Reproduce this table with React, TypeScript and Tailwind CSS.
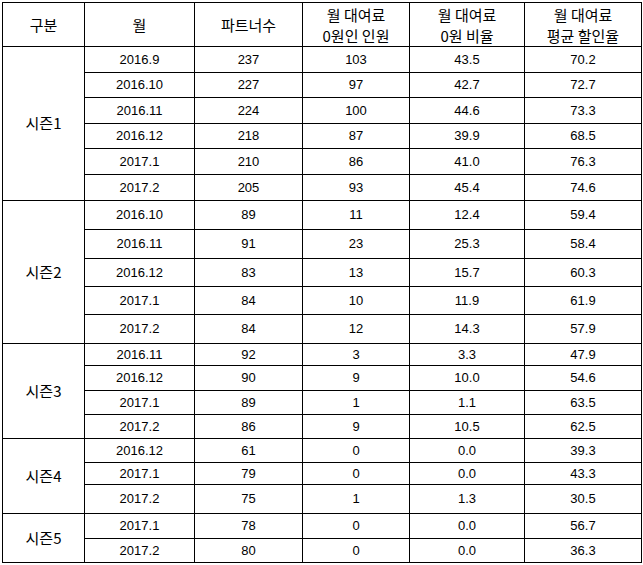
import React from 'react';

type Row = { month: string; partners: number; zero: number; ratio: string; discount: string; h: number };
type Season = { name: string; rows: Row[] };

const seasons: Season[] = [
  {
    name: '시즌1',
    rows: [
      { month: '2016.9', partners: 237, zero: 103, ratio: '43.5', discount: '70.2', h: 26 },
      { month: '2016.10', partners: 227, zero: 97, ratio: '42.7', discount: '72.7', h: 25 },
      { month: '2016.11', partners: 224, zero: 100, ratio: '44.6', discount: '73.3', h: 26 },
      { month: '2016.12', partners: 218, zero: 87, ratio: '39.9', discount: '68.5', h: 25 },
      { month: '2017.1', partners: 210, zero: 86, ratio: '41.0', discount: '76.3', h: 26 },
      { month: '2017.2', partners: 205, zero: 93, ratio: '45.4', discount: '74.6', h: 26 },
    ],
  },
  {
    name: '시즌2',
    rows: [
      { month: '2016.10', partners: 89, zero: 11, ratio: '12.4', discount: '59.4', h: 29 },
      { month: '2016.11', partners: 91, zero: 23, ratio: '25.3', discount: '58.4', h: 29 },
      { month: '2016.12', partners: 83, zero: 13, ratio: '15.7', discount: '60.3', h: 28 },
      { month: '2017.1', partners: 84, zero: 10, ratio: '11.9', discount: '61.9', h: 28 },
      { month: '2017.2', partners: 84, zero: 12, ratio: '14.3', discount: '57.9', h: 29 },
    ],
  },
  {
    name: '시즌3',
    rows: [
      { month: '2016.11', partners: 92, zero: 3, ratio: '3.3', discount: '47.9', h: 22 },
      { month: '2016.12', partners: 90, zero: 9, ratio: '10.0', discount: '54.6', h: 25 },
      { month: '2017.1', partners: 89, zero: 1, ratio: '1.1', discount: '63.5', h: 24 },
      { month: '2017.2', partners: 86, zero: 9, ratio: '10.5', discount: '62.5', h: 24 },
    ],
  },
  {
    name: '시즌4',
    rows: [
      { month: '2016.12', partners: 61, zero: 0, ratio: '0.0', discount: '39.3', h: 24 },
      { month: '2017.1', partners: 79, zero: 0, ratio: '0.0', discount: '43.3', h: 22 },
      { month: '2017.2', partners: 75, zero: 1, ratio: '1.3', discount: '30.5', h: 29 },
    ],
  },
  {
    name: '시즌5',
    rows: [
      { month: '2017.1', partners: 78, zero: 0, ratio: '0.0', discount: '56.7', h: 25 },
      { month: '2017.2', partners: 80, zero: 0, ratio: '0.0', discount: '36.3', h: 24 },
    ],
  },
];

const cell = 'border border-black p-0 text-center align-middle';
const num = 'text-[13px] font-["Liberation_Sans","Noto_Sans_CJK_KR",sans-serif]';

export default function App() {
  return (
    <div className="bg-white w-[643px] h-[565px] pl-[2px] pt-[2px] text-black font-['Noto_Sans_CJK_KR',sans-serif]">
      <table className="table-fixed border-collapse">
        <colgroup>
          <col className="w-[82px]" />
          <col className="w-[110px]" />
          <col className="w-[108px]" />
          <col className="w-[107px]" />
          <col className="w-[115px]" />
          <col className="w-[117px]" />
        </colgroup>
        <thead>
          <tr className="h-[44px] text-[15px] leading-[21px]">
            <th className={`${cell} font-normal`}>구분</th>
            <th className={`${cell} font-normal`}>월</th>
            <th className={`${cell} font-normal`}>파트너수</th>
            <th className={`${cell} font-normal`}>월 대여료<br />0원인 인원</th>
            <th className={`${cell} font-normal`}>월 대여료<br />0원 비율</th>
            <th className={`${cell} font-normal`}>월 대여료<br />평균 할인율</th>
          </tr>
        </thead>
        <tbody>
          {seasons.map((s) =>
            s.rows.map((r, i) => (
              <tr key={s.name + r.month} style={{ height: r.h }}>
                {i === 0 && (
                  <td rowSpan={s.rows.length} className={`${cell} text-[15px]`}>
                    {s.name}
                  </td>
                )}
                <td className={`${cell} ${num}`}>{r.month}</td>
                <td className={`${cell} ${num}`}>{r.partners}</td>
                <td className={`${cell} ${num}`}>{r.zero}</td>
                <td className={`${cell} ${num}`}>{r.ratio}</td>
                <td className={`${cell} ${num}`}>{r.discount}</td>
              </tr>
            ))
          )}
        </tbody>
      </table>
    </div>
  );
}
